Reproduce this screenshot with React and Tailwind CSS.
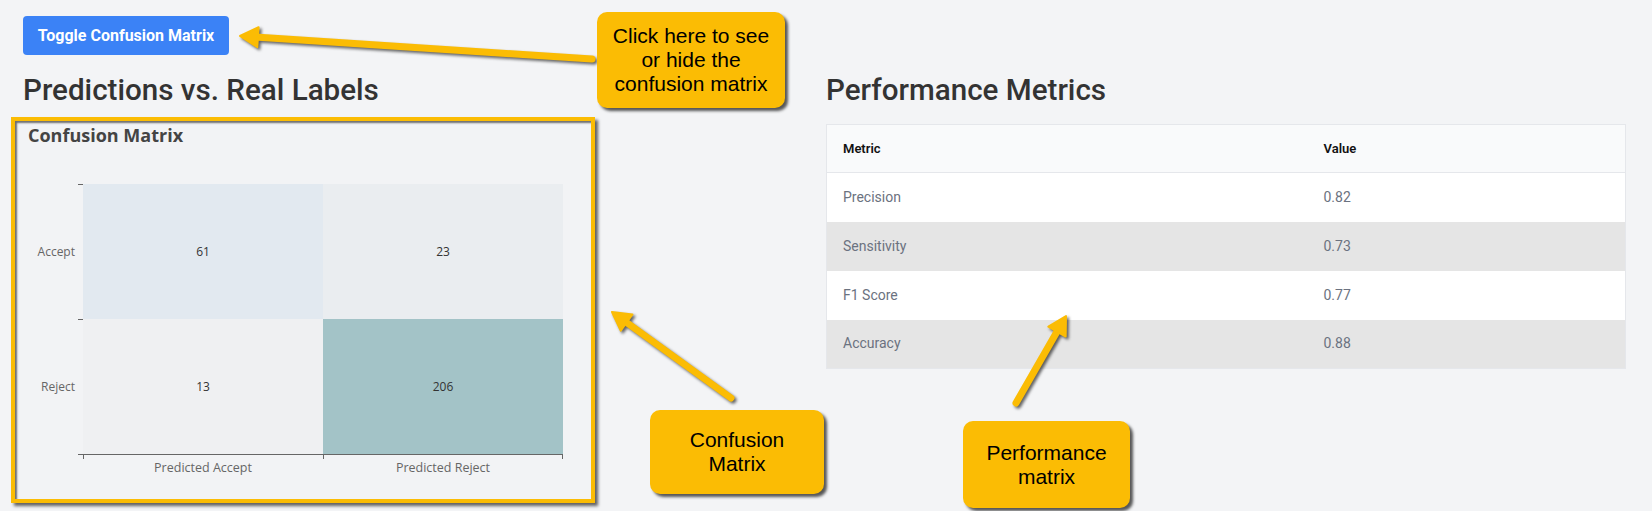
import React from "react";

const Y = "#fbbc04";

function arrowParts(tx, ty, hx, hy, L = 18, H = 10) {
  const dx = hx - tx;
  const dy = hy - ty;
  const len = Math.hypot(dx, dy);
  const ux = dx / len;
  const uy = dy / len;
  const nx = -uy;
  const ny = ux;
  const bx = hx - ux * L;
  const by = hy - uy * L;
  return {
    line: [tx, ty, bx + ux * 3, by + uy * 3],
    head: `${hx},${hy} ${bx + nx * H},${by + ny * H} ${bx - nx * H},${by - ny * H}`,
  };
}

function Arrow({ tx, ty, hx, hy }) {
  const a = arrowParts(tx, ty, hx, hy);
  return (
    <g>
      <line
        x1={a.line[0]}
        y1={a.line[1]}
        x2={a.line[2]}
        y2={a.line[3]}
        stroke={Y}
        strokeWidth="7"
        strokeLinecap="round"
      />
      <polygon points={a.head} fill={Y} stroke={Y} strokeWidth="2" strokeLinejoin="round" />
    </g>
  );
}

const rows = [
  ["Precision", "0.82"],
  ["Sensitivity", "0.73"],
  ["F1 Score", "0.77"],
  ["Accuracy", "0.88"],
];

export default function App() {
  return (
    <div className="relative h-[511px] w-[1652px] overflow-hidden bg-[#f3f4f6] font-['Roboto',sans-serif]">
      <div className="pl-[23px] pt-[16px]">
        <button className="h-[39px] w-[206px] rounded-[4px] bg-[#3b82f6] text-[16px] font-bold text-white">
          Toggle Confusion Matrix
        </button>
      </div>

      <div className="mt-[17px] flex items-start">
        <div className="ml-[11px] w-[584px]">
          <h2 className="ml-[12px] text-[29.6px] font-medium leading-[36px] text-[#333333]">
            Predictions vs. Real Labels
          </h2>
          <div className="mt-[9px] h-[386px] border-4 border-[#fbbc04] bg-[#f2f3f5] shadow-[3px_3px_3px_rgba(0,0,0,0.6),inset_2px_2px_2px_rgba(0,0,0,0.55)] font-['Open_Sans',sans-serif]">
            <div className="pl-[13px] pt-[2px] text-[18px] font-bold leading-[24px] text-[#444444]">
              Confusion Matrix
            </div>
            <div className="mt-[37px] grid grid-cols-[63px_5px_240px_240px] grid-rows-[135px_135px_5px_auto] text-[12px] text-[#333333]">
              <div className="flex items-center justify-end pr-[3px] text-[#666666]">Accept</div>
              <div className="border-t border-[#666666]" />
              <div className="flex items-center justify-center bg-[#e2e9f0]">61</div>
              <div className="flex items-center justify-center bg-[#eaedf0]">23</div>

              <div className="flex items-center justify-end pr-[3px] text-[#666666]">Reject</div>
              <div className="border-t border-[#666666]" />
              <div className="flex items-center justify-center bg-[#eff0f2]">13</div>
              <div className="flex items-center justify-center bg-[#a3c3c7]">206</div>

              <div />
              <div className="border-t border-[#666666]" />
              <div className="border-l border-t border-[#666666]" />
              <div className="border-l border-r border-t border-[#666666]" />

              <div />
              <div />
              <div className="pt-[1px] text-center text-[12.5px] leading-[16px] text-[#666666]">Predicted Accept</div>
              <div className="pt-[1px] text-center text-[12.5px] leading-[16px] text-[#666666]">Predicted Reject</div>
            </div>
          </div>
        </div>

        <div className="ml-[231px] w-[800px]">
          <h2 className="text-[29.6px] font-medium leading-[36px] text-[#333333]">Performance Metrics</h2>
          <table className="mt-[16px] w-[800px] table-fixed border-collapse border border-[#e5e7eb] text-[14px]">
            <colgroup>
              <col className="w-[481px]" />
              <col />
            </colgroup>
            <thead>
              <tr className="h-[48px] border-b border-[#e5e7eb] bg-[#f9fafb]">
                <th className="px-[16px] text-left text-[13px] font-semibold text-[#111111]">Metric</th>
                <th className="px-[16px] text-left text-[13px] font-semibold text-[#111111]">Value</th>
              </tr>
            </thead>
            <tbody className="text-[#6b7280]">
              {rows.map(([m, v], i) => (
                <tr key={m} className={`h-[49px] ${i % 2 === 1 ? "bg-[#e5e5e5]" : "bg-white"}`}>
                  <td className="px-[16px]">{m}</td>
                  <td className="px-[16px]">{v}</td>
                </tr>
              ))}
            </tbody>
          </table>
        </div>
      </div>

      <svg
        className="pointer-events-none absolute left-0 top-0 [filter:drop-shadow(2px_2px_1.5px_rgba(0,0,0,0.6))]"
        width="1652"
        height="511"
        viewBox="0 0 1652 511"
      >
        <Arrow tx={592} ty={59} hx={240} hy={36} />
        <Arrow tx={731} ty={398} hx={612} hy={312} />
        <Arrow tx={1016} ty={403} hx={1066} hy={316} />
      </svg>

      <div className="absolute left-[597px] top-[12px] flex h-[96px] w-[188px] items-center justify-center rounded-[10px] bg-[#fbbc04] text-center font-['Liberation_Sans',Arial,sans-serif] text-[21px] leading-[24px] text-black shadow-[3px_3px_3px_rgba(0,0,0,0.65)]">
        Click here to see
        <br />
        or hide the
        <br />
        confusion matrix
      </div>
      <div className="absolute left-[650px] top-[410px] flex h-[84px] w-[174px] items-center justify-center rounded-[10px] bg-[#fbbc04] text-center font-['Liberation_Sans',Arial,sans-serif] text-[21px] leading-[24px] text-black shadow-[3px_3px_3px_rgba(0,0,0,0.65)]">
        Confusion
        <br />
        Matrix
      </div>
      <div className="absolute left-[963px] top-[421px] flex h-[87px] w-[167px] items-center justify-center rounded-[10px] bg-[#fbbc04] text-center font-['Liberation_Sans',Arial,sans-serif] text-[21px] leading-[24px] text-black shadow-[3px_3px_3px_rgba(0,0,0,0.65)]">
        Performance
        <br />
        matrix
      </div>
    </div>
  );
}
